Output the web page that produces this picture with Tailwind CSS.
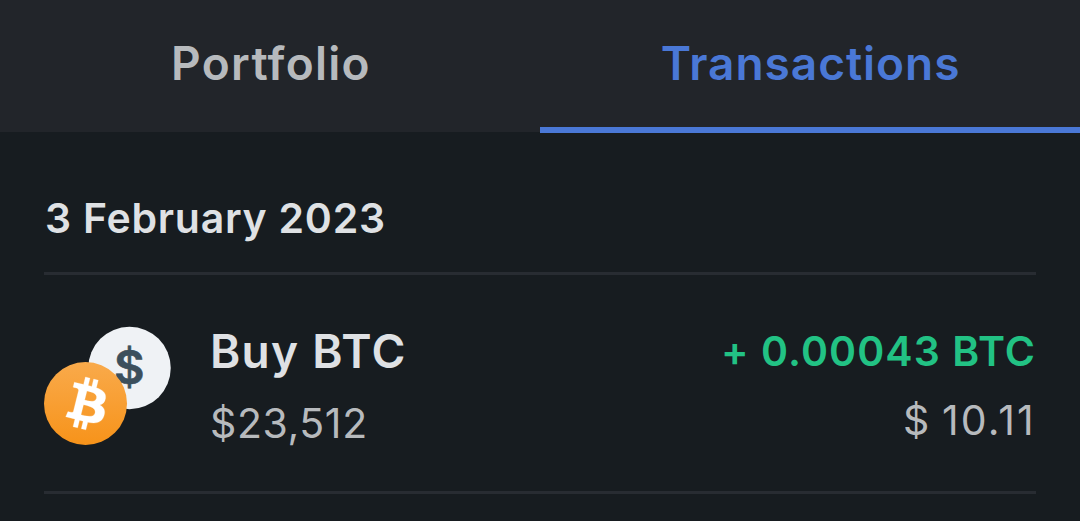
<!DOCTYPE html>
<html lang="en">

<head>
	<meta charset="UTF-8" />
	<meta name="viewport" content="width=device-width, initial-scale=1.0" />
	<title>Transactions</title>
	<script src="https://cdn.jsdelivr.net/npm/@tailwindcss/browser@4"></script>
</head>

<body class="h-[521px] overflow-hidden bg-[#171c20] font-['Inter',sans-serif] text-[#dfe1e4]">
	<!-- Tabs -->
	<nav class="grid grid-cols-2 h-[133px] bg-[#22252a] text-[46px] leading-[56px] font-semibold text-center">
		<a href="#" class="pt-[35px] pl-0.5 border-b border-[#171c20] text-[#b7babd] tracking-[1.3px]">Portfolio</a>
		<a href="#" class="pt-[35px] pl-px border-b-6 border-[#4a78d6] text-[#4a78d6] tracking-[0.95px]">Transactions</a>
	</nav>

	<!-- Transaction list -->
	<main class="px-11">
		<h2 class="h-[142px] pt-[59px] pl-px border-b-3 border-[#282c32] text-[41px] leading-[52px] font-semibold tracking-[0.75px]">3 February 2023</h2>

		<div class="flex h-[219px] border-b-3 border-[#282c32]">
			<svg class="mt-[51px] w-32 h-[120px] shrink-0" viewBox="0 0 128 120">
				<defs>
					<linearGradient id="coin" x1="0" y1="0" x2="0" y2="1">
						<stop offset="0" stop-color="#f9aa4b" />
						<stop offset="1" stop-color="#f7931a" />
					</linearGradient>
				</defs>
				<circle cx="85.5" cy="42" r="41.25" fill="#eff2f5" />
				<text x="85.3" y="57.5" text-anchor="middle" font-size="47" font-weight="600" fill="#3c4f5c" stroke="#3c4f5c" stroke-width="0.6">$</text>
				<circle cx="41.5" cy="77.5" r="41.5" fill="url(#coin)" />
				<path transform="translate(0.1 35.1) scale(2.65)" fill="#fff" stroke="#fff" stroke-width="0.1" d="M23.189 14.02c.314-2.096-1.283-3.223-3.465-3.975l.708-2.84-1.728-.43-.69 2.765c-.454-.114-.92-.22-1.385-.326l.695-2.783L15.596 6l-.708 2.839c-.376-.086-.746-.17-1.104-.26l.002-.009-2.384-.595-.46 1.846s1.283.294 1.256.312c.7.175.826.638.805 1.006l-.806 3.235c.048.012.11.03.18.057l-.183-.045-1.13 4.532c-.086.212-.303.531-.793.41.018.025-1.256-.313-1.256-.313l-.858 1.978 2.25.561c.418.105.828.215 1.231.318l-.715 2.872 1.727.43.708-2.84c.472.127.93.245 1.378.357l-.706 2.828 1.728.43.715-2.866c2.948.558 5.164.333 6.097-2.333.752-2.146-.037-3.385-1.588-4.192 1.13-.26 1.98-1.003 2.207-2.538zm-3.95 5.538c-.533 2.147-4.148.986-5.32.695l.95-3.805c1.172.293 4.929.872 4.37 3.11zm.535-5.569c-.487 1.953-3.495.96-4.47.717l.86-3.45c.975.243 4.118.696 3.61 2.733z" />
			</svg>

			<div class="ml-[37px] pt-12">
				<p class="pl-px text-[46px] leading-[56px] font-semibold tracking-[1.3px]">Buy BTC</p>
				<p class="mt-[18px] pl-px text-[41px] leading-[52px] tracking-[0.6px] text-[#b7babd]">$23,512</p>
			</div>

			<div class="ml-auto pt-[50px] text-right text-[41px] leading-[52px]">
				<p class="font-semibold tracking-[1.05px] text-[#22c284]">+ 0.00043 BTC</p>
				<p class="mt-[17px] tracking-[2px] [word-spacing:-3px] text-[#b7babd]">$ <span class="tracking-[2.2px]">10.11</span></p>
			</div>
		</div>
	</main>
</body>

</html>
